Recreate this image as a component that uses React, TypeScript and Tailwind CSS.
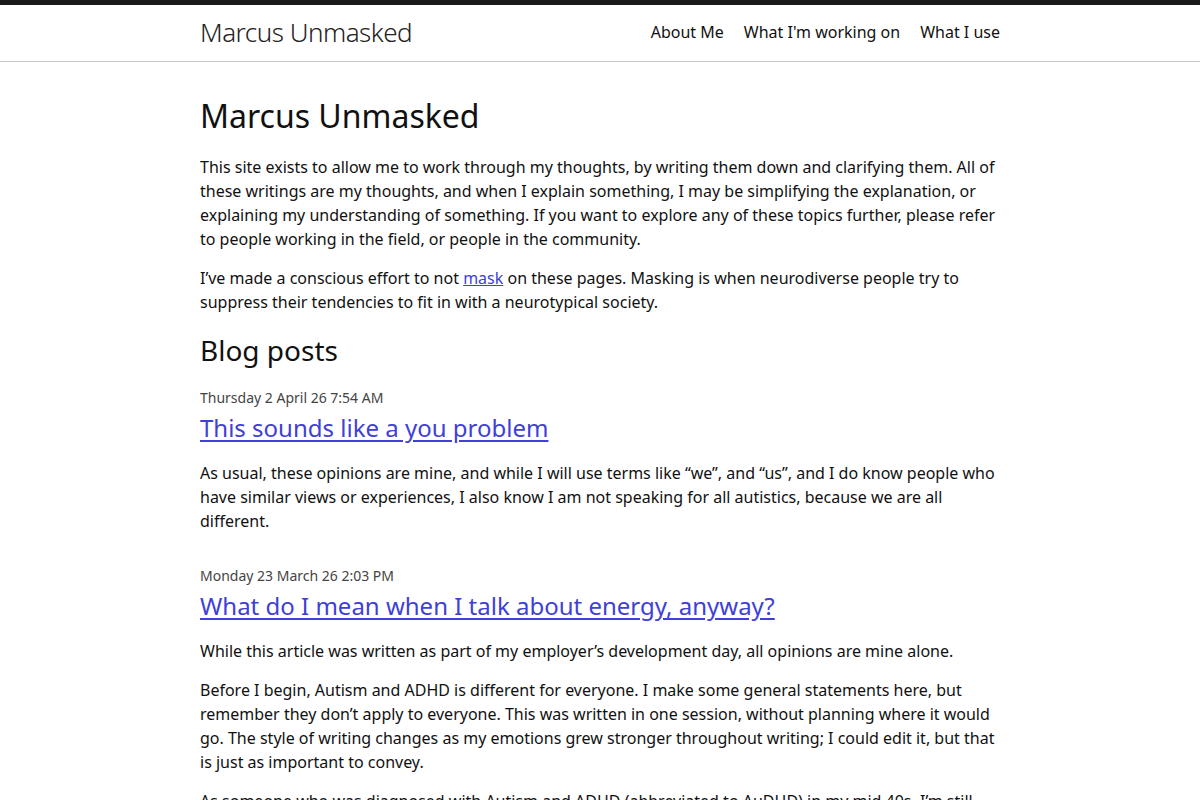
const posts = [
  {
    date: "Thursday 2 April 26 7:54 AM",
    title: "This sounds like a you problem",
    excerpt: [
      "As usual, these opinions are mine, and while I will use terms like \u201cwe\u201d, and \u201cus\u201d, and I do know people who have similar views or experiences, I also know I am not speaking for all autistics, because we are all different.",
    ],
  },
  {
    date: "Monday 23 March 26 2:03 PM",
    title: "What do I mean when I talk about energy, anyway?",
    excerpt: [
      "While this article was written as part of my employer\u2019s development day, all opinions are mine alone.",
      "Before I begin, Autism and ADHD is different for everyone. I make some general statements here, but remember they don\u2019t apply to everyone. This was written in one session, without planning where it would go. The style of writing changes as my emotions grew stronger throughout writing; I could edit it, but that is just as important to convey.",
      "As someone who was diagnosed with Autism and ADHD (abbreviated to AuDHD) in my mid 40s, I\u2019m still learning what that means for me and how it affects my day to day life.",
    ],
  },
];

const navLinks = ["About Me", "What I'm working on", "What I use"];

export default function App() {
  return (
    <div className="min-h-screen bg-white text-[#111] text-base leading-6 font-['Noto_Sans','Open_Sans',sans-serif]">
      <header className="border-t-[5px] border-t-[#1a1a1a] border-b border-b-[#c8c8c8]">
        <div className="max-w-[800px] mx-auto flex items-start justify-between h-14">
          <a href="#" className="text-[26px] font-light tracking-[-0.5px] leading-[55px] text-[#222]">
            Marcus Unmasked
          </a>
          <nav className="flex gap-5">
            {navLinks.map((l) => (
              <a key={l} href="#" className="text-[#111] leading-[54px]">
                {l}
              </a>
            ))}
          </nav>
        </div>
      </header>

      <main className="max-w-[800px] mx-auto pt-[30px]">
        <h1 className="text-[32px] leading-[48px] mb-[15px]">Marcus Unmasked</h1>
        <p className="mb-[15px]">
          This site exists to allow me to work through my thoughts, by writing them down and clarifying them. All of
          these writings are my thoughts, and when I explain something, I may be simplifying the explanation, or
          explaining my understanding of something. If you want to explore any of these topics further, please refer
          to people working in the field, or people in the community.
        </p>
        <p className="mb-[15px]">
          I&rsquo;ve made a conscious effort to not{" "}
          <a href="#" className="text-[#4040d8] underline">
            mask
          </a>{" "}
          on these pages. Masking is when neurodiverse people try to suppress their tendencies to fit in with a
          neurotypical society.
        </p>

        <h2 className="text-[28px] leading-[42px] mb-[15px]">Blog posts</h2>
        <ul>
          {posts.map((p) => (
            <li key={p.title} className="mb-[31px]">
              <span className="block text-sm leading-6 mt-px text-[#444]">{p.date}</span>
              <h3 className="text-2xl leading-[35px] mb-4">
                <a href="#" className="text-[#4040d8] underline underline-offset-[3px]">
                  {p.title}
                </a>
              </h3>
              {p.excerpt.map((t, i) => (
                <p key={i} className="mb-[15px]">
                  {t}
                </p>
              ))}
            </li>
          ))}
        </ul>
      </main>
    </div>
  );
}
